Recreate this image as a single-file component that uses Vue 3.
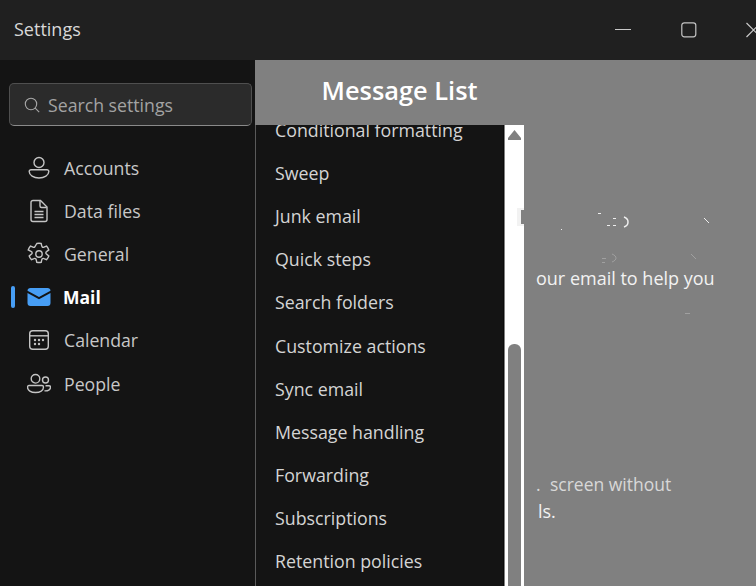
<script setup>
const navItems = [
  { id: "accounts", label: "Accounts" },
  { id: "files", label: "Data files" },
  { id: "general", label: "General" },
  { id: "mail", label: "Mail", active: true },
  { id: "calendar", label: "Calendar" },
  { id: "people", label: "People" },
];
const listItems = [
  "Conditional formatting",
  "Sweep",
  "Junk email",
  "Quick steps",
  "Search folders",
  "Customize actions",
  "Sync email",
  "Message handling",
  "Forwarding",
  "Subscriptions",
  "Retention policies",
];
</script>

<template>
  <div class="window">
    <header class="titlebar">
      <span class="title">Settings</span>
      <div class="controls">
        <span class="ctl"><svg width="18" height="18" viewBox="0 0 18 18"><path d="M1 8.500h16" stroke="#c9c9c9" stroke-width="1" fill="none" /></svg></span>
        <span class="ctl"><svg width="18" height="18" viewBox="0 0 18 18"><rect x="1.800" y="1.800" width="14" height="14" rx="2.500" stroke="#c4c4c4" stroke-width="1.200" fill="none" /></svg></span>
        <span class="ctl"><svg width="18" height="18" viewBox="0 0 18 18"><path d="M1.500 2l14 14M15.500 2l-14 14" stroke="#c9c9c9" stroke-width="1.200" fill="none" /></svg></span>
      </div>
    </header>
    <div class="body">
      <aside class="sidebar">
        <div class="search">
          <svg width="18" height="18" viewBox="0 0 18 18" fill="none" stroke="#a8a8a8" stroke-width="1.100">
            <circle cx="8" cy="8" r="5.700" />
            <path d="M12.200 12.200l4 4" />
          </svg>
          <span class="search-text">Search settings</span>
        </div>
        <nav class="nav">
          <div v-for="item in navItems" :key="item.id" class="nav-item" :class="{ active: item.active }">
            <span class="bar"></span>
            <span class="icon">
              <svg v-if="item.id === 'accounts'" width="24" height="24" viewBox="0 0 24 24" fill="none" stroke="#c4c4c4" stroke-width="1.400">
                <circle cx="12" cy="6.500" r="5" />
                <path d="M4 13.800h16a1.800 1.800 0 0 1 1.800 1.800c0 3.600-4.400 6.400-9.800 6.400S2.200 19.200 2.200 15.600A1.800 1.800 0 0 1 4 13.800z" />
              </svg>
              <svg v-else-if="item.id === 'files'" width="24" height="24" viewBox="0 0 24 24" fill="none" stroke="#c4c4c4" stroke-width="1.400">
                <path d="M6 1.500h7.500L20 8v12.500a2 2 0 0 1-2 2H6a2 2 0 0 1-2-2v-17a2 2 0 0 1 2-2z" />
                <path d="M13 1.800V7a1.500 1.500 0 0 0 1.500 1.500h5.200M7.500 12.500h9M7.500 15.500h9M7.500 18.500h9" />
              </svg>
              <svg v-else-if="item.id === 'general'" width="24" height="24" viewBox="0 0 24 24" fill="none" stroke="#c4c4c4" stroke-width="1.400">
                <circle cx="12" cy="12" r="3.200" />
                <path d="M9.800 1.500a11 11 0 0 1 4.400 0l.6 2.700a1.500 1.500 0 0 0 2.200 1l2.500-1.100a11 11 0 0 1 2.300 3.800l-2.200 1.700a1.500 1.500 0 0 0 0 2.600l2.200 1.700a11 11 0 0 1-2.300 3.800l-2.500-1.100a1.500 1.500 0 0 0-2.200 1l-.6 2.700a11 11 0 0 1-4.400 0l-.6-2.700a1.500 1.500 0 0 0-2.200-1l-2.500 1.100a11 11 0 0 1-2.300-3.800l2.200-1.700a1.500 1.500 0 0 0 0-2.600L1.200 7.900a11 11 0 0 1 2.300-3.800L6 5.200a1.500 1.500 0 0 0 2.200-1z" />
              </svg>
              <svg v-else-if="item.id === 'mail'" width="24" height="24" viewBox="0 0 24 24">
                <path d="M3.500 3h17A3 3 0 0 1 23.500 5.800L12 12 .5 5.800A3 3 0 0 1 3.500 3z" fill="#479ef5" />
                <path d="M.5 8l11.500 6.200L23.500 8v10a3 3 0 0 1-3 3h-17a3 3 0 0 1-3-3z" fill="#479ef5" />
              </svg>
              <svg v-else-if="item.id === 'calendar'" width="24" height="24" viewBox="0 0 24 24" fill="none" stroke="#c4c4c4" stroke-width="1.400">
                <rect x="2.700" y="2.700" width="18.600" height="18.600" rx="3" />
                <path d="M2.700 7.800h18.600" />
                <g fill="#c4c4c4" stroke="none">
                  <circle cx="8" cy="12" r="1.200" /><circle cx="12" cy="12" r="1.200" /><circle cx="16" cy="12" r="1.200" />
                  <circle cx="8" cy="16" r="1.200" /><circle cx="12" cy="16" r="1.200" />
                </g>
              </svg>
              <svg v-else width="24" height="24" viewBox="0 0 24 24" fill="none" stroke="#c4c4c4" stroke-width="1.400">
                <circle cx="8.500" cy="6.800" r="4.300" />
                <circle cx="18.500" cy="8" r="3" />
                <path d="M2 13.500h13a1.500 1.500 0 0 1 1.500 1.500c0 3.500-3.500 5.500-8 5.500S.5 18.500.5 15A1.500 1.500 0 0 1 2 13.500z" />
                <path d="M17.500 18.800c3.500.4 6-1.200 6-3.600a1.500 1.500 0 0 0-1.500-1.500h-3.500" />
              </svg>
            </span>
            <span class="label">{{ item.label }}</span>
          </div>
        </nav>
      </aside>
      <main class="panel">
        <h1 class="heading">Message List</h1>
        <div class="columns">
          <ul class="list">
            <li v-for="entry in listItems" :key="entry">{{ entry }}</li>
          </ul>
          <div class="scrollbar">
            <span class="arrow"></span>
            <span class="thumb"></span>
          </div>
          <div class="detail">
            <svg class="specks" width="232" height="200" viewBox="0 0 232 200" fill="none">
              <rect x="-7" y="83" width="7" height="18" fill="#f2f2f2" />
              <rect x="-3" y="85" width="3" height="14" fill="#808080" />
              <g stroke="#eeeeee" stroke-width="1">
                <path d="M74 88.500h3M83 100.500h3M89 93.500h3M89 100.500h3M180 93l5 5M37 104.500h1" />
                <path d="M100 92c3 1 4 3 4 5s-1 4-4 5" stroke-width="1.500" />
              </g>
              <g stroke="#a0a0a0" stroke-width="1">
                <path d="M78 133.500h4M78 137.500h3M88 129c3 1 4 3 4 4s-1 3-4 4M167 129l5 5M25 150.500h1M161 188.500h5" />
              </g>
            </svg>
            <p class="line first">our email to help you</p>
            <p class="line second"><span class="stub">.</span>screen without</p>
            <p class="line third">ls.</p>
          </div>
        </div>
      </main>
    </div>
  </div>
</template>

<style>
html,
body {
  margin: 0;
  background: #808080;
}
</style>

<style scoped>
.window {
  width: 756px;
  height: 586px;
  overflow: hidden;
  display: flex;
  flex-direction: column;
  font-family: "Open Sans", "Noto Sans", sans-serif;
}
.titlebar {
  height: 60px;
  flex: none;
  background: #202020;
  display: flex;
  align-items: center;
  padding-left: 14px;
  color: #d8d8d8;
  overflow: hidden;
}
.title {
  font-size: 18px;
  margin-top: -3px;
}
.controls {
  margin-left: auto;
  margin-right: -31px;
  display: flex;
  flex: none;
}
.ctl {
  width: 65.5px;
  display: flex;
  align-items: center;
  justify-content: center;
}
.body {
  flex: 1;
  display: flex;
  min-height: 0;
}
.sidebar {
  width: 255px;
  flex: none;
  background: #141414;
  padding: 23px 3px 0 9px;
  box-sizing: border-box;
}
.search {
  height: 43px;
  box-sizing: border-box;
  background: #2b2b2b;
  border: 1px solid #4f4f4f;
  border-bottom-color: #8a8a8a;
  border-radius: 5px;
  display: flex;
  align-items: center;
  padding-left: 13px;
  gap: 7px;
}
.search-text {
  color: #a3a3a3;
  font-size: 17.7px;
}
.nav {
  margin: 20px 0 0 -9px;
}
.nav-item {
  height: 43.2px;
  display: flex;
  align-items: center;
  color: #c8c8c8;
  font-size: 17.7px;
}
.bar {
  width: 4px;
  height: 22px;
  margin-left: 11px;
  border-radius: 2px;
}
.active .bar {
  background: #479ef5;
}
.icon {
  width: 24px;
  height: 24px;
  margin-left: 12px;
  display: flex;
}
.label {
  margin-left: 13px;
}
.active .label {
  color: #fff;
  font-weight: 700;
  font-size: 17.5px;
  margin-left: 12px;
}
.panel {
  flex: 1;
  min-width: 0;
  background: #808080;
  display: flex;
  flex-direction: column;
}
.heading {
  height: 65px;
  flex: none;
  margin: 0;
  padding-left: 66.5px;
  line-height: 60px;
  font-size: 25.4px;
  font-weight: 600;
  color: #fff;
}
.columns {
  flex: 1;
  display: flex;
  min-height: 0;
}
.list {
  width: 249px;
  flex: none;
  box-sizing: border-box;
  margin: 0;
  list-style: none;
  background: #141414;
  border-left: 1px solid #5a5a5a;
  border-right: 1px solid #0a0a0a;
  padding: 0 0 0 19px;
  overflow: hidden;
  color: #d4d4d4;
  font-size: 17.8px;
}
.list li {
  height: 43.2px;
  line-height: 43.2px;
  white-space: nowrap;
}
.list li:first-child {
  margin-top: -16.4px;
}
.scrollbar {
  width: 19px;
  flex: none;
  margin-left: 1px;
  background: #fff;
  display: flex;
  flex-direction: column;
  align-items: center;
  overflow: hidden;
}
.arrow {
  width: 13px;
  height: 10px;
  margin-top: 5px;
  background: #808080;
  clip-path: polygon(50% 0, 100% 80%, 100% 100%, 0 100%, 0 80%);
}
.thumb {
  width: 13px;
  flex: 1;
  margin-top: 204px;
  background: #808080;
  border-radius: 6px 6px 0 0;
}
.detail {
  position: relative;
  flex: 1;
  min-width: 0;
  padding-left: 12px;
  color: #f2f2f2;
  font-size: 18px;
}
.specks {
  position: absolute;
  left: 0;
  top: 0;
  overflow: visible;
}
.line {
  margin: 0;
  line-height: 26px;
  white-space: nowrap;
}
.first {
  margin-top: 140px;
}
.second {
  margin-top: 180px;
  color: #d8d8d8;
  font-size: 17.5px;
}
.stub {
  display: inline-block;
  width: 14px;
}
.third {
  margin-top: 1px;
  padding-left: 2px;
}
</style>
